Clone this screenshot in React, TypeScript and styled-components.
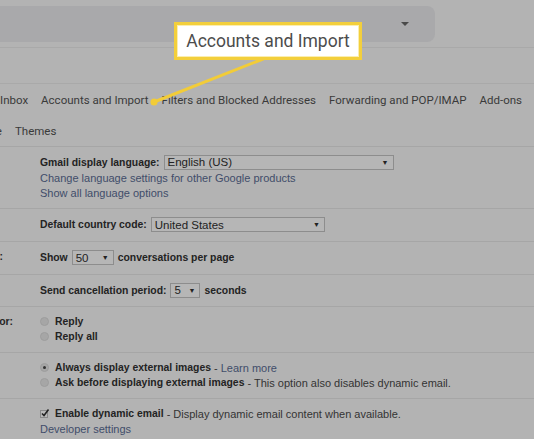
import styled, { createGlobalStyle } from 'styled-components'

const Global = createGlobalStyle`
  html, body {
    margin: 0;
    padding: 0;
    background: #b3b3b3;
    overflow: hidden;
  }
`

const Page = styled.div`
  position: relative;
  width: 534px;
  height: 439px;
  overflow: hidden;
  background: #b3b3b3;
  font-family: 'Liberation Sans', Arial, sans-serif;
  font-size: 11px;
  color: #262626;
`

// Header / search
const Header = styled.div`
  height: 48px;
  padding-top: 6px;
  box-sizing: border-box;
  border-bottom: 1px solid #a9a9a9;
`

const SearchBar = styled.div`
  margin-left: -12px;
  width: 447px;
  height: 36px;
  border-radius: 8px;
  background: #a9a9ab;
  display: flex;
  align-items: center;
  justify-content: flex-end;
  padding-right: 26px;
  box-sizing: border-box;
`

const Caret = styled.div`
  width: 0;
  height: 0;
  border-left: 4px solid transparent;
  border-right: 4px solid transparent;
  border-top: 4px solid #4a4a4a;
`

const Spacer = styled.div`
  height: 35px;
  border-bottom: 1px solid #a9a9a9;
`

// Tabs
const TabRow = styled.div<{ $shift?: number }>`
  display: flex;
  align-items: center;
  gap: 13px;
  height: 31px;
  margin-left: ${p => p.$shift ?? 0}px;
  white-space: nowrap;
  font-family: Roboto, 'Noto Sans', sans-serif;
  font-size: 11.5px;
  color: #3a3a3a;
`

const Tab = styled.span``

// Settings sections
const Section = styled.div`
  display: grid;
  grid-template-columns: 40px 1fr;
  border-top: 1px solid #a6a6a6;
  padding: 7px 0 8px;
`

const Label = styled.div<{ $end: number }>`
  width: ${p => p.$end}px;
  display: flex;
  justify-content: flex-end;
  overflow: hidden;
  white-space: nowrap;
  font-weight: bold;
  font-size: 10.4px;
  height: 15px;
  line-height: 15px;
`

const Body = styled.div`
  display: flex;
  flex-direction: column;
`

const Line = styled.div<{ $h?: number }>`
  display: flex;
  align-items: center;
  height: ${p => p.$h ?? 15}px;
  white-space: nowrap;
`

const Strong = styled.span`
  font-weight: bold;
  font-size: 10.4px;
  color: #232323;
`

const Plain = styled.span`
  color: #333;
`

const Link = styled.span`
  color: #414d6a;
`

const Select = styled.div<{ $w: number }>`
  width: ${p => p.$w}px;
  height: 15px;
  box-sizing: border-box;
  border: 1px solid #8d8d8d;
  background: #b6b6b6;
  margin: 0 4px;
  padding: 0 4px 0 3px;
  display: flex;
  align-items: center;
  justify-content: space-between;
  font-size: 11.5px;
  color: #222;
`

const Arrow = styled.span`
  font-size: 7px;
  color: #222;
`

const Radio = styled.span<{ $on?: boolean }>`
  width: 9px;
  height: 9px;
  border-radius: 50%;
  background: #a6a6a6;
  border: 1px solid #9d9d9d;
  box-sizing: border-box;
  margin: 0 6px 0 0;
  display: inline-flex;
  align-items: center;
  justify-content: center;
  &::after {
    content: '';
    width: 3px;
    height: 3px;
    border-radius: 50%;
    background: ${p => (p.$on ? '#333' : 'transparent')};
  }
`

const Check = styled.span`
  width: 8px;
  height: 8px;
  border: 1px solid #8a8a8a;
  background: #b9b9b9;
  box-sizing: border-box;
  margin: 0 7px 0 0;
  position: relative;
  display: inline-block;
  svg {
    position: absolute;
    left: -1px;
    top: -3px;
  }
`

// Callout overlay
const Callout = styled.div`
  position: absolute;
  left: 174px;
  top: 22px;
  width: 188px;
  height: 38px;
  box-sizing: border-box;
  border: 3px solid #f3cf3c;
  background: #fff;
  box-shadow: inset 0 0 0 1px #fbeeb0;
  display: flex;
  align-items: center;
  justify-content: center;
  font-family: Roboto, 'Noto Sans', sans-serif;
  font-size: 17.5px;
  color: #4c4c4c;
`

const Pointer = styled.svg`
  position: absolute;
  left: 0;
  top: 0;
  pointer-events: none;
`

function Dropdown({ w, value }: { w: number; value: string }) {
  return (
    <Select $w={w}>
      <span>{value}</span>
      <Arrow>▼</Arrow>
    </Select>
  )
}

export default function App() {
  return (
    <Page>
      <Global />
      <Header>
        <SearchBar>
          <Caret />
        </SearchBar>
      </Header>
      <Spacer />
      <TabRow>
        <Tab>Inbox</Tab>
        <Tab>Accounts and Import</Tab>
        <Tab>Filters and Blocked Addresses</Tab>
        <Tab>Forwarding and POP/IMAP</Tab>
        <Tab>Add-ons</Tab>
      </TabRow>
      <TabRow $shift={-31}>
        <Tab>Offline</Tab>
        <Tab>Themes</Tab>
      </TabRow>

      <Section>
        <Label $end={0}>Language:</Label>
        <Body>
          <Line $h={16}>
            <Strong>Gmail display language:</Strong>
            <Dropdown w={230} value="English (US)" />
          </Line>
          <Line>
            <Link>Change language settings for other Google products</Link>
          </Line>
          <Line>
            <Link>Show all language options</Link>
          </Line>
        </Body>
      </Section>

      <Section>
        <Label $end={0}>Phone numbers:</Label>
        <Body>
          <Line $h={17}>
            <Strong>Default country code:</Strong>
            <Dropdown w={174} value="United States" />
          </Line>
        </Body>
      </Section>

      <Section>
        <Label $end={3}>Maximum page size:</Label>
        <Body>
          <Line $h={17}>
            <Strong>Show</Strong>
            <Dropdown w={42} value="50" />
            <Strong>conversations per page</Strong>
          </Line>
        </Body>
      </Section>

      <Section>
        <Label $end={0}>Undo Send:</Label>
        <Body>
          <Line $h={16}>
            <Strong>Send cancellation period:</Strong>
            <Dropdown w={30} value="5" />
            <Strong>seconds</Strong>
          </Line>
        </Body>
      </Section>

      <Section>
        <Label $end={13}>Default reply behavior:</Label>
        <Body>
          <Line>
            <Radio />
            <Strong>Reply</Strong>
          </Line>
          <Line>
            <Radio />
            <Strong>Reply all</Strong>
          </Line>
        </Body>
      </Section>

      <Section>
        <Label $end={0}>Images:</Label>
        <Body>
          <Line>
            <Radio $on />
            <Strong>Always display external images</Strong>
            <Plain>&nbsp;- </Plain>
            <Link>&nbsp;Learn more</Link>
          </Line>
          <Line>
            <Radio />
            <Strong>Ask before displaying external images</Strong>
            <Plain>&nbsp;- This option also disables dynamic email.</Plain>
          </Line>
        </Body>
      </Section>

      <Section>
        <Label $end={0}>Dynamic email:</Label>
        <Body>
          <Line>
            <Check>
              <svg width="10" height="10" viewBox="0 0 10 10">
                <path d="M2 5.5 L4 7.5 L8.5 1.5" fill="none" stroke="#222" strokeWidth="1.6" />
              </svg>
            </Check>
            <Strong>Enable dynamic email</Strong>
            <Plain>&nbsp;- Display dynamic email content when available.</Plain>
          </Line>
          <Line>
            <Link>Developer settings</Link>
          </Line>
        </Body>
      </Section>

      <Pointer width="534" height="439" viewBox="0 0 534 439">
        <line x1="263" y1="59" x2="154" y2="102" stroke="#f2cc38" strokeWidth="3" strokeLinecap="round" />
        <circle cx="154" cy="102" r="3.5" fill="#f2cc38" />
      </Pointer>
      <Callout>Accounts and Import</Callout>
    </Page>
  )
}
